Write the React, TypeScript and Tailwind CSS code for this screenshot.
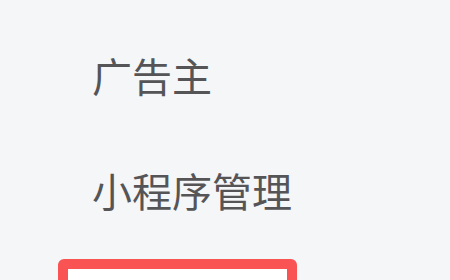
import React from 'react';

export default function App() {
  return (
    <div className="w-[450px] h-[280px] overflow-hidden bg-[#f5f6f8]" style={{ fontFamily: '"Noto Sans CJK SC", sans-serif' }}>
      <div className="flex flex-col pt-[51px] pl-[58px]">
        <div className="pl-[34px] text-[40px] leading-[48px] text-[#555557]">广告主</div>
        <div className="mt-[67px] pl-[34px] text-[40px] leading-[48px] text-[#555557]">小程序管理</div>
        <div className="mt-[45px] w-[239px] h-[60px] rounded-[6px] border-[10px] border-[#f95353] bg-white"></div>
      </div>
    </div>
  );
}
